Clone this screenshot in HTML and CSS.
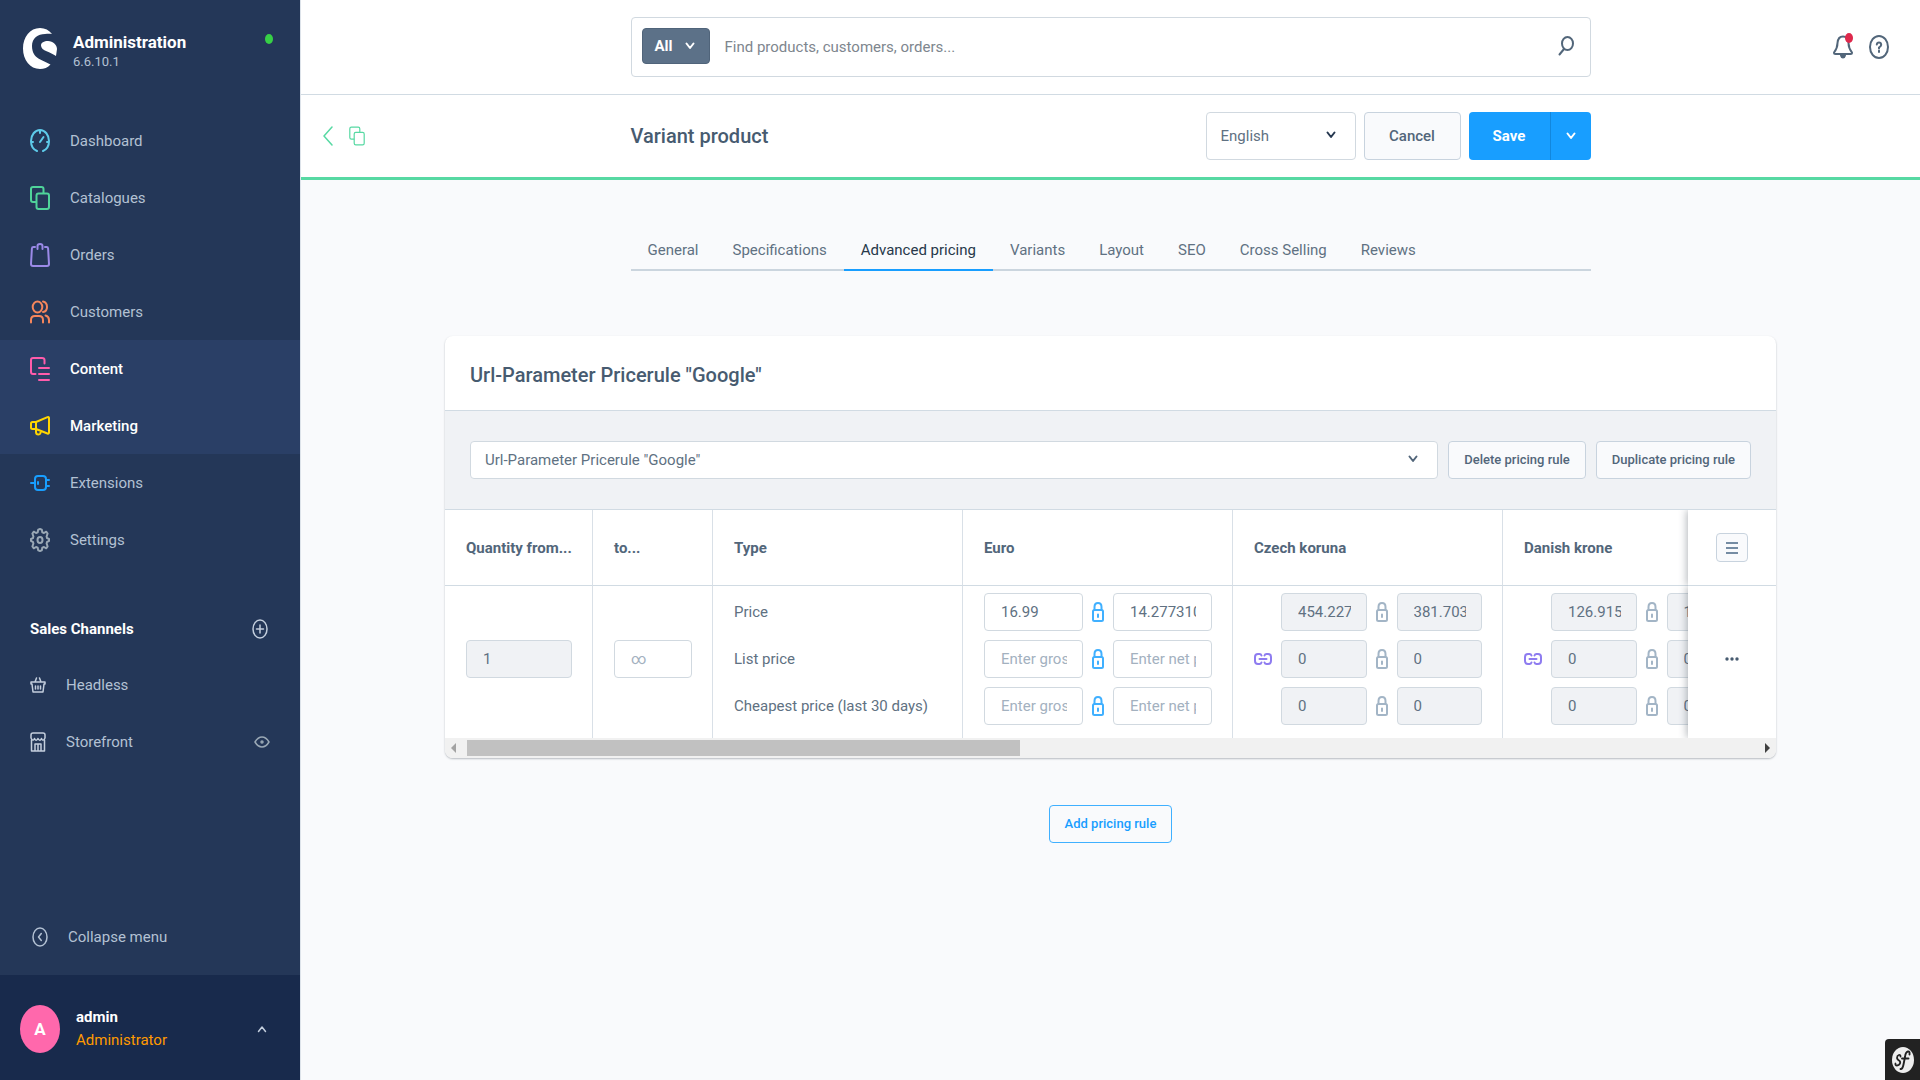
FILE: index.html
```html
<!DOCTYPE html>
<html lang="en">
<head>
<meta charset="utf-8">
<title>Variant product | Administration</title>
<meta name="viewport" content="width=device-width, initial-scale=1">
<link rel="stylesheet" href="styles.css">
</head>
<body>
<svg class="sprite" aria-hidden="true">
  <symbol id="i-copy" viewBox="0 0 20 24"><path d="M6 16H3Q1 16 1 14V3Q1 1 3 1H11.500Q13.500 1 13.500 3V7"/><rect x="6.500" y="7.500" width="12.500" height="15.500" rx="2"/></symbol>
  <symbol id="i-chevron" viewBox="0 0 10 8"><path d="M1.500 1.500 5 6 8.500 1.500"/></symbol>
  <symbol id="i-lock" viewBox="0 0 12 20"><rect x="1" y="8" width="10" height="11" rx="1.500"/><path d="M2.500 8V5Q2.500 1 6 1T9.500 5V8M6 12.500v2.500"/></symbol>
  <symbol id="i-link" viewBox="0 0 18 12"><path d="M7.500 9.500Q7 11 5.500 11H4Q1 11 1 8V4Q1 1 4 1H5.500Q7 1 7.500 2.500M10.500 2.500Q11 1 12.500 1H14Q17 1 17 4V8Q17 11 14 11H12.500Q11 11 10.500 9.500M5.500 6H12.500"/></symbol>
</svg>
<div class="app">
  <aside class="sidebar">
    <div class="brand">
      <svg class="brand-logo" viewBox="0 0 34 41"><path d="M29 6C26 2 22 0 17 0C7 0 0 9 0 20.500S7 41 17 41C21 41 25 39.500 27.500 36.500C20 32 9 31 9 18C9 10 15 6 22 6C25 5.500 27 5.500 29 6Z"/><path d="M18 17.500C18 14.500 21 13 25 13C30 13 34 17 34 21L33 28C28 24 18 23 18 17.500Z"/></svg>
      <div class="brand-text"><span class="brand-name">Administration</span><span class="brand-version">6.6.10.1</span></div>
      <span class="brand-status"></span>
    </div>
    <nav class="menu" aria-label="Main">
      <a class="menu-item" href="#"><svg class="icon c-cyan" viewBox="0 0 20 24"><path d="M7 22C3.500 20.500 1 17 1 12C1 6 5 1 10 1S19 6 19 12C19 17 16.500 20.500 13 22M10 1V4M1 13H3M17 13H19M10 13 13.500 8"/></svg>Dashboard</a>
      <a class="menu-item" href="#"><svg class="icon c-green"><use href="#i-copy"/></svg>Catalogues</a>
      <a class="menu-item" href="#"><svg class="icon c-purple" viewBox="0 0 20 24"><path d="M5 4H3.500Q2 4 1.900 5.500L1 21Q1 23 3 23H17Q19 23 19 21L18.100 5.500Q18 4 16.500 4H15M7.500 6V3Q7.500 1 10 1T12.500 3V6"/></svg>Orders</a>
      <a class="menu-item" href="#"><svg class="icon c-orange" viewBox="0 0 20 24"><ellipse cx="7.500" cy="7" rx="4.800" ry="5.500"/><path d="M1 22.500V20Q1 16 5 16H9Q13 16 13 20V22.500M13 1.500Q17 2.500 17 7T13 12M15.500 15.500Q19 16.500 19 20V22.500"/></svg>Customers</a>
      <a class="menu-item menu-item-active" href="#"><svg class="icon c-pink" viewBox="0 0 20 24"><path d="M5.500 17H3Q1 17 1 15V3Q1 1 3 1H12Q14.500 1 14.500 3V6.500M9 11H19M9 17H19M9 23H19"/></svg>Content</a>
      <a class="menu-item menu-item-active" href="#"><svg class="icon c-yellow" viewBox="0 0 20 24"><path d="M6 8 17.500 3.200Q19 2.700 19 4V18.500Q19 20 17.500 19.500L6 15ZM6 8H2.500Q1 8 1 9.500V13.500Q1 15 2.500 15H6M6 15V18Q6 20.500 8.500 20.500T10.500 17"/></svg>Marketing</a>
      <a class="menu-item" href="#"><svg class="icon c-blue" viewBox="0 0 20 24"><path d="M5 8Q5 5 8 5H13Q16 5 16 8V16Q16 19 13 19H8Q5 19 5 16ZM1 12H5M8 11V13M16 9H19M16 15H19"/></svg>Extensions</a>
      <a class="menu-item" href="#"><svg class="icon c-grey" viewBox="0 0 20 24"><path d="M10 1 11.800 1.600 12.300 4.300 14 5 16.200 3.700 17.600 5.500 16.600 8.500 17.100 10.200 19 11 19 13 17.100 13.800 16.600 15.500 17.600 18.500 16.200 20.300 14 19 12.300 19.700 11.800 22.400 10 23 8.200 22.400 7.700 19.700 6 19 3.800 20.300 2.400 18.500 3.400 15.500 2.900 13.800 1 13 1 11 2.900 10.200 3.400 8.500 2.400 5.500 3.800 3.700 6 5 7.700 4.300 8.200 1.600Z"/><ellipse cx="10" cy="12" rx="2.500" ry="3"/></svg>Settings</a>
    </nav>
    <section class="channels">
      <div class="channels-head"><h2 class="channels-title">Sales Channels</h2>
        <button class="icon-button" type="button" aria-label="Add sales channel"><svg class="icon-sm c-light" viewBox="0 0 16 20"><ellipse cx="8" cy="10" rx="7" ry="9"/><path d="M8 6V14M4.500 10H11.500"/></svg></button></div>
      <a class="channel" href="#"><svg class="icon-sm c-light" viewBox="0 0 16 20"><path d="M1 7H15V9H14L13 17H3L2 9H1ZM5 7 6.500 3M11 7 9.500 3M5.500 11V14M8 11V14M10.500 11V14"/></svg>Headless</a>
      <a class="channel" href="#"><svg class="icon-sm c-light" viewBox="0 0 16 20"><path d="M3 1H13Q15 1 15 3V6Q13 10 11.500 6.500Q9.800 10 8 6.500Q6.200 10 4.500 6.500Q3 10 1 6V3Q1 1 3 1ZM1.500 8V19H14.500V8M5 19V12H11V19M8 12V19"/></svg>Storefront
        <svg class="icon-sm channel-eye" viewBox="0 0 16 20"><path d="M1 10Q4 5 8 5T15 10Q12 15 8 15T1 10Z"/><ellipse cx="8" cy="10" rx="1" ry="1"/></svg></a>
    </section>
    <button class="collapse" type="button"><svg class="icon-sm" viewBox="0 0 16 20"><ellipse cx="8" cy="10" rx="7" ry="9"/><path d="M9.300 6.500 6.500 10 9.300 13.500"/></svg>Collapse menu</button>
    <button class="user" type="button">
      <span class="avatar">A</span>
      <span class="user-text"><span class="user-name">admin</span><span class="user-role">Administrator</span></span>
      <svg class="chevron chevron-up"><use href="#i-chevron"/></svg>
    </button>
  </aside>

  <main class="main">
    <header class="topbar">
      <form class="search" role="search">
        <button class="search-type" type="button">All<svg class="chevron chevron-bold"><use href="#i-chevron"/></svg></button>
        <input class="search-input" type="text" aria-label="Search" placeholder="Find products, customers, orders...">
        <button class="icon-button search-go" type="button" aria-label="Start search"><svg class="icon-sm" viewBox="0 0 16 20"><ellipse cx="9.500" cy="7.500" rx="5.500" ry="6.500"/><path d="M6 13 1.500 18.500"/></svg></button>
      </form>
      <div class="top-actions">
        <button class="icon-button bell" type="button" aria-label="Notifications"><svg class="icon" viewBox="0 0 20 24"><path d="M2.500 19Q1 19 1 17.500Q4.500 13 4.500 8Q5 1.500 10 1.500T15.500 8Q15.500 13 19 17.500Q19 19 17.500 19ZM8 20.500Q8.500 22.500 10 22.500T12 20.500Z"/></svg><span class="bell-dot"></span></button>
        <button class="icon-button" type="button" aria-label="Help"><svg class="icon" viewBox="0 0 20 24"><ellipse cx="10" cy="12" rx="9" ry="11"/><path d="M7.800 9.500Q8 7.500 10 7.500T12.200 9.800Q12 11 10 12.500V13.500M10 15.800V17"/></svg></button>
      </div>
    </header>

    <div class="smartbar">
      <div class="smartbar-nav">
        <a class="smartbar-back" href="#" aria-label="Back"><svg class="back-icon" viewBox="0 0 10 20"><path d="M9 1 1 10 9 19"/></svg></a>
        <svg class="icon-sm"><use href="#i-copy"/></svg>
      </div>
      <div class="smartbar-content">
        <h1 class="page-title">Variant product</h1>
        <div class="smartbar-actions">
          <div class="select select-language"><select aria-label="Language"><option>English</option></select><svg class="chevron"><use href="#i-chevron"/></svg></div>
          <button class="button button-lg" type="button">Cancel</button>
          <div class="split"><button class="button button-primary split-main" type="button">Save</button><button class="button button-primary split-more" type="button" aria-label="More save options"><svg class="chevron"><use href="#i-chevron"/></svg></button></div>
        </div>
      </div>
    </div>

    <div class="content">
      <nav class="tabs" aria-label="Product">
        <a class="tab" href="#">General</a>
        <a class="tab" href="#">Specifications</a>
        <a class="tab tab-active" href="#">Advanced pricing</a>
        <a class="tab" href="#">Variants</a>
        <a class="tab" href="#">Layout</a>
        <a class="tab" href="#">SEO</a>
        <a class="tab" href="#">Cross Selling</a>
        <a class="tab" href="#">Reviews</a>
      </nav>

      <section class="card">
        <h2 class="card-title">Url-Parameter Pricerule "Google"</h2>
        <div class="card-toolbar">
          <div class="select select-rule"><select aria-label="Pricing rule"><option>Url-Parameter Pricerule "Google"</option></select><svg class="chevron"><use href="#i-chevron"/></svg></div>
          <button class="button button-sm" type="button">Delete pricing rule</button>
          <button class="button button-sm" type="button">Duplicate pricing rule</button>
        </div>
        <div class="grid-wrap">
          <table class="grid">
            <colgroup><col class="col-from"><col class="col-to"><col class="col-type"><col class="col-price"><col class="col-price"><col class="col-price"><col class="col-menu"></colgroup>
            <thead><tr>
              <th>Quantity from...</th><th>to...</th><th>Type</th><th>Euro</th><th>Czech koruna</th><th>Danish krone</th>
              <th class="cell-sticky"><button class="list-button" type="button" aria-label="Columns"><svg class="list-icon" viewBox="0 0 12 14"><path d="M0 2H12M0 7H12M0 12H12"/></svg></button></th>
            </tr></thead>
            <tbody><tr>
              <td><input class="field" type="text" aria-label="Quantity from" value="1" disabled></td>
              <td><input class="field" type="text" aria-label="Quantity to" placeholder="∞"></td>
              <td><div class="stack"><span class="type">Price</span><span class="type">List price</span><span class="type">Cheapest price (last 30 days)</span></div></td>
              <td><div class="stack">
                <div class="pair"><input class="field" type="text" aria-label="Euro gross price" value="16.99"><svg class="lock lock-on"><use href="#i-lock"/></svg><input class="field" type="text" aria-label="Euro net price" value="14.277310"></div>
                <div class="pair"><input class="field" type="text" aria-label="Euro gross list price" placeholder="Enter gross price"><svg class="lock lock-on"><use href="#i-lock"/></svg><input class="field" type="text" aria-label="Euro net list price" placeholder="Enter net price"></div>
                <div class="pair"><input class="field" type="text" aria-label="Euro gross cheapest price" placeholder="Enter gross price"><svg class="lock lock-on"><use href="#i-lock"/></svg><input class="field" type="text" aria-label="Euro net cheapest price" placeholder="Enter net price"></div>
              </div></td>
              <td><div class="inherit"><svg class="link"><use href="#i-link"/></svg><div class="stack">
                <div class="pair"><input class="field" type="text" aria-label="Koruna gross price" value="454.227" disabled><svg class="lock"><use href="#i-lock"/></svg><input class="field" type="text" aria-label="Koruna net price" value="381.703" disabled></div>
                <div class="pair"><input class="field" type="text" aria-label="Koruna gross list price" value="0" disabled><svg class="lock"><use href="#i-lock"/></svg><input class="field" type="text" aria-label="Koruna net list price" value="0" disabled></div>
                <div class="pair"><input class="field" type="text" aria-label="Koruna gross cheapest price" value="0" disabled><svg class="lock"><use href="#i-lock"/></svg><input class="field" type="text" aria-label="Koruna net cheapest price" value="0" disabled></div>
              </div></div></td>
              <td><div class="inherit"><svg class="link"><use href="#i-link"/></svg><div class="stack">
                <div class="pair"><input class="field" type="text" aria-label="Krone gross price" value="126.9152" disabled><svg class="lock"><use href="#i-lock"/></svg><input class="field" type="text" aria-label="Krone net price" value="106" disabled></div>
                <div class="pair"><input class="field" type="text" aria-label="Krone gross list price" value="0" disabled><svg class="lock"><use href="#i-lock"/></svg><input class="field" type="text" aria-label="Krone net list price" value="0" disabled></div>
                <div class="pair"><input class="field" type="text" aria-label="Krone gross cheapest price" value="0" disabled><svg class="lock"><use href="#i-lock"/></svg><input class="field" type="text" aria-label="Krone net cheapest price" value="0" disabled></div>
              </div></div></td>
              <td class="cell-sticky"><button class="icon-button" type="button" aria-label="Row actions"><svg class="dots" viewBox="0 0 14 4"><circle cx="2" cy="2" r="1.700"/><circle cx="7" cy="2" r="1.700"/><circle cx="12" cy="2" r="1.700"/></svg></button></td>
            </tr></tbody>
          </table>
        </div>
        <div class="scrollbar">
          <svg class="scroll-arrow" viewBox="0 0 5 10"><path d="M5 0V10L0 5Z" fill="#a3a3a3"/></svg>
          <div class="scroll-track"><div class="scroll-thumb"></div></div>
          <svg class="scroll-arrow" viewBox="0 0 5 10"><path d="M0 0V10L5 5Z" fill="#404040"/></svg>
        </div>
      </section>

      <button class="button button-sm button-outline" type="button">Add pricing rule</button>
    </div>
  </main>
</div>
<a class="debug-badge" href="#" aria-label="Debug toolbar"><svg class="debug-icon" viewBox="0 0 24 28"><ellipse cx="12" cy="14" rx="11" ry="13" fill="#eee"/><path d="M9.500 10.500Q9.500 8.500 7.800 9T6 12Q6.300 13.500 8 14.500T9 17.500Q8 19.500 6 19.500T4.500 17.500" fill="none" stroke="#222" stroke-width="1.800"/><path d="M18.500 8.500Q19 5 16.800 5.500T14 11L12.500 18.500Q11.500 23.500 9.500 23M11 12.500H17.500" fill="none" stroke="#222" stroke-width="1.900"/></svg></a>
</body>
</html>
```
FILE: styles.css
```css
* { box-sizing: border-box; }
body {
  margin: 0;
  background: #f9fafc;
  color: #607182;
  font: 15px/24px Roboto, "Liberation Sans", sans-serif;
}
button, input, select { margin: 0; font: inherit; color: inherit; }
button { cursor: pointer; }
a { color: inherit; text-decoration: none; }
h1, h2 { margin: 0; }
svg { flex: none; fill: none; stroke: currentColor; stroke-width: 1.5; stroke-linecap: round; stroke-linejoin: round; }
.sprite { position: absolute; width: 0; height: 0; }
.icon { width: 20px; height: 24px; }
.icon-sm { width: 16px; height: 20px; }
.chevron { width: 10px; height: 8px; }
.icon-button { display: flex; padding: 0; border: 0; background: none; }

.app { display: grid; grid-template-columns: 300px minmax(0, 1fr); min-height: 100vh; }

/* Sidebar */
.sidebar { display: flex; flex-direction: column; background: #243758; color: #b3c1d3; }
.brand { display: flex; gap: 16px; padding: 28px 27px 43px 23px; height: 112px; }
.brand-logo { width: 34px; height: 41px; fill: #fff; stroke: none; }
.brand-text { display: flex; flex: 1; flex-direction: column; line-height: 20px; padding-top: 4px; }
.brand-name { color: #fff; font-size: 17px; font-weight: 700; }
.brand-version { font-size: 13px; }
.brand-status { width: 8px; height: 10px; margin-top: 6px; border-radius: 50%; background: #37d046; }
.menu-item { display: flex; align-items: center; gap: 20px; height: 57px; padding: 0 30px; }
.menu-item svg { stroke-width: 2; }
.menu-item-active { background: #2a3f66; color: #fff; font-weight: 500; }
.c-cyan { color: #5ecbea; }
.c-green { color: #4fd39a; }
.c-purple { color: #9b8ae8; }
.c-orange { color: #f5865c; }
.c-pink { color: #ff5cab; }
.c-yellow { color: #ffd500; }
.c-blue { color: #189eff; }
.c-grey { color: #9aa8b5; }
.c-light { color: #c3cedd; }
.channels { display: flex; flex-direction: column; padding: 34px 30px 0; }
.channels-head { display: flex; align-items: center; justify-content: space-between; height: 54px; padding: 0 2px 0 0; }
.channels-title { color: #fff; font-size: 15px; font-weight: 700; }
.channel { display: flex; align-items: center; gap: 20px; height: 57px; }
.channel-eye { margin-left: auto; color: #9aa8b5; }
.collapse { display: flex; align-items: center; gap: 20px; height: 76px; margin-top: auto; padding: 0 32px; border: 0; background: none; }
.user { display: flex; align-items: center; gap: 16px; height: 105px; padding: 3px 33px 0 20px; border: 0; background: #182a4c; color: #c3cedd; text-align: left; }
.avatar { display: flex; align-items: center; justify-content: center; width: 40px; height: 48px; border-radius: 50%; background: #ff68ac; color: #fff; font-size: 17px; font-weight: 700; }
.user-text { display: flex; flex: 1; flex-direction: column; line-height: 23px; }
.user-name { color: #fff; font-weight: 700; }
.user-role { color: #ff9a00; }
.chevron-up { transform: rotate(180deg); }

/* Top bar */
.main { border-left: 1px solid #dde3ea; }
.topbar { display: grid; grid-template-columns: 1fr minmax(0, 960px) 1fr; align-items: center; height: 95px; border-bottom: 1px solid #d1dbe3; background: #fff; color: #52667a; }
.search { grid-column: 2; display: flex; align-items: center; gap: 15px; height: 60px; padding: 0 16px 2px 10px; border: 1px solid #d1d9e0; border-radius: 4px; }
.search-type { display: flex; align-items: center; justify-content: space-between; width: 68px; height: 36px; padding: 0 14px 0 12px; border: 1px solid #50647a; border-radius: 4px; background: #5c7188; color: #fff; font-weight: 700; }
.chevron-bold, .search-go svg { stroke-width: 2; }
.search-input { flex: 1; min-width: 0; padding: 2px 0 0; border: 0; background: none; }
.search-input::placeholder { color: #7e868e; opacity: 1; }
.top-actions { display: flex; justify-content: flex-end; gap: 16px; padding-right: 31px; }
.top-actions .icon { stroke-width: 2; }
.bell { position: relative; }
.bell-dot { position: absolute; top: -2px; right: 0; width: 8px; height: 10px; border-radius: 50%; background: #de294c; }

/* Smart bar */
.smartbar { display: grid; grid-template-columns: 1fr minmax(0, 960px) 1fr; align-items: center; height: 85px; border-bottom: 3px solid #57d9a3; background: #fff; }
.smartbar-nav { display: flex; align-items: center; gap: 16px; padding-left: 22px; color: #57d9a3; }
.smartbar-back { display: flex; }
.back-icon { width: 10px; height: 20px; }
.smartbar-content { display: flex; align-items: center; justify-content: space-between; }
.page-title { color: #475b70; font-size: 20px; font-weight: 500; }
.smartbar-actions { display: flex; gap: 8px; }
.select { position: relative; display: flex; color: #52667a; }
.select select { appearance: none; width: 100%; padding: 0 40px 0 14px; border: 1px solid #d1d9e0; border-radius: 4px; background: #fff; color: #607182; }
.select .chevron { position: absolute; top: calc(50% - 5px); right: 20px; stroke-width: 2; }
.select-language { width: 150px; height: 48px; color: #263850; }
.select-rule { flex: 1; height: 38px; }
.button { display: inline-flex; align-items: center; justify-content: center; border: 1px solid #c8d3de; border-radius: 4px; background: #f9fafc; color: #52667a; font-weight: 500; }
.button-lg { width: 97px; height: 48px; padding: 0; }
.button-sm { height: 38px; padding: 0 15px; font-size: 13px; }
.split { display: flex; }
.button-primary { height: 48px; border: 0; background: #189eff; color: #fff; font-weight: 700; }
.split-main { width: 82px; border-right: 1px solid #1287dd; border-radius: 4px 0 0 4px; }
.split-more { width: 40px; padding: 0; border-radius: 0 4px 4px 0; }
.split-more .chevron { stroke-width: 2; }

/* Content */
.content { display: flex; flex-direction: column; align-items: center; padding: 48px 40px; }
.tabs { display: flex; width: 100%; max-width: 960px; height: 43px; border-bottom: 2px solid #cbd5de; }
.tab { height: 43px; padding: 10px 17px 0; }
.tab-active { border-bottom: 2px solid #189eff; color: #27384a; }
.card { width: 100%; max-width: 1331px; margin: 65px 0 47px; overflow: hidden; border-radius: 8px; background: #fff; box-shadow: 0 1px 2px rgba(60, 70, 80, .35); }
.card-title { padding: 27px 25px 23px; color: #475b70; font-size: 20px; font-weight: 500; line-height: 24px; }
.card-toolbar { display: flex; gap: 10px; padding: 30px 25px; border-top: 1px solid #d1dbe3; border-bottom: 1px solid #d1dbe3; background: #f0f2f5; }
.grid-wrap { overflow: hidden; }
.grid { width: 1416px; table-layout: fixed; border-collapse: separate; border-spacing: 0; }
.col-from { width: 148px; }
.col-to { width: 120px; }
.col-type { width: 250px; }
.col-price { width: 270px; }
.col-menu { width: 88px; }
.grid th { height: 76px; padding: 0 20px 0 21px; border-right: 1px solid #d9e0e7; border-bottom: 1px solid #d1dbe3; color: #52667a; font-weight: 700; text-align: left; white-space: nowrap; }
.grid td { height: 152px; padding: 0 20px 7px 21px; border-right: 1px solid #d9e0e7; }
.grid .cell-sticky { position: sticky; right: 0; padding-right: 21px; border-right: 0; background: #fff; box-shadow: -1px 0 8px rgba(60, 70, 80, .4); clip-path: inset(0 0 0 -10px); }
.cell-sticky button { margin: 0 auto; }
.grid th:first-child { padding-right: 0; }
.list-button { display: flex; align-items: center; justify-content: center; width: 32px; height: 29px; padding: 0; border: 1px solid #c8d3de; border-radius: 4px; background: #f9fafc; color: #758ca3; }
.list-icon { width: 12px; height: 14px; stroke-width: 2; }
.dots { width: 14px; height: 4px; fill: #475b70; stroke: none; }
.stack { display: flex; flex: 1; flex-direction: column; gap: 9px; min-width: 0; }
.type { line-height: 38px; white-space: nowrap; }
.pair { display: flex; align-items: center; gap: 9px; }
.inherit { display: flex; align-items: center; gap: 9px; }
.field { flex: 1; width: 100%; min-width: 0; height: 38px; padding: 0 15px 0 16px; border: 1px solid #d1d9e0; border-radius: 4px; background: #fff; color: #607182; }
.field::placeholder { color: #a3b1bf; opacity: 1; }
.field:disabled { background: #f0f2f5; }
.lock { width: 12px; height: 20px; color: #a3b5c6; stroke-width: 2; }
.lock-on { color: #40b0ff; }
.link { width: 18px; height: 12px; color: #8e7cf0; stroke-width: 2; }
.scrollbar { display: flex; align-items: center; gap: 11px; height: 20px; padding: 0 6px; background: #f1f1f1; }
.scroll-arrow { width: 5px; height: 10px; stroke: none; }
.scroll-track { flex: 1; }
.scroll-thumb { width: 43%; height: 16px; background: #c1c1c1; }
.button-outline { border-color: #40b0ff; color: #189eff; background: none; }

.debug-badge { position: fixed; right: 0; bottom: 0; display: flex; align-items: center; padding: 7px 5px 6px 6px; border-radius: 4px 0 0; background: #222; }
.debug-icon { width: 24px; height: 28px; stroke: none; }
```
